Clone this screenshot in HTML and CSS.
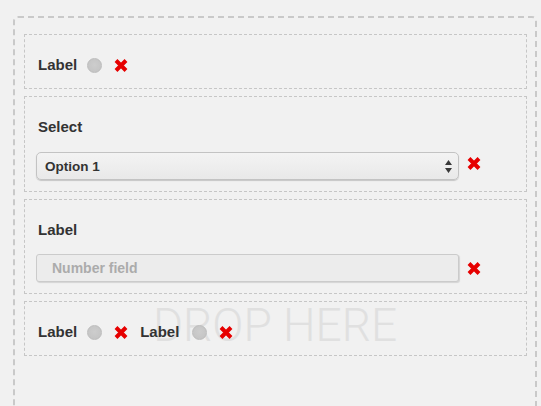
FILE: index.html
```html
<!DOCTYPE html>
<html>
<head>
<meta charset="utf-8">
<link rel="stylesheet" href="styles.css">
</head>
<body>
<div class="canvas">
  <div class="drop-hint">DROP HERE</div>

  <div class="field-box">
    <div class="row">
      <span class="label">Label</span>
      <span class="radio"></span>
      <span class="remove"><svg viewBox="0 0 14 13" width="14" height="13"><path d="M2 1.5 L12 11.5 M12 1.5 L2 11.5" /></svg></span>
    </div>
  </div>

  <div class="field-box">
    <div class="row"><span class="label">Select</span></div>
    <div class="control-row select-row">
      <div class="select">
        <span class="select-value">Option 1</span>
        <svg class="select-arrows" viewBox="0 0 7 13" width="7" height="13"><path d="M0 5 L3.5 0 L7 5 Z M0 8 L3.5 13 L7 8 Z" /></svg>
      </div>
      <span class="remove"><svg viewBox="0 0 14 13" width="14" height="13"><path d="M2 1.5 L12 11.5 M12 1.5 L2 11.5" /></svg></span>
    </div>
  </div>

  <div class="field-box">
    <div class="row"><span class="label">Label</span></div>
    <div class="control-row input-row">
      <input class="number-input" type="text" placeholder="Number field">
      <span class="remove"><svg viewBox="0 0 14 13" width="14" height="13"><path d="M2 1.5 L12 11.5 M12 1.5 L2 11.5" /></svg></span>
    </div>
  </div>

  <div class="field-box">
    <div class="row">
      <span class="label">Label</span>
      <span class="radio"></span>
      <span class="remove"><svg viewBox="0 0 14 13" width="14" height="13"><path d="M2 1.5 L12 11.5 M12 1.5 L2 11.5" /></svg></span>
      <span class="label next">Label</span>
      <span class="radio radio-wide"></span>
      <span class="remove"><svg viewBox="0 0 14 13" width="14" height="13"><path d="M2 1.5 L12 11.5 M12 1.5 L2 11.5" /></svg></span>
    </div>
  </div>
</div>
</body>
</html>
```
FILE: styles.css
```css
html, body {
  margin: 0;
  padding: 0;
  background: #f1f1f1;
  height: 100%;
  overflow: hidden;
}

body {
  font-family: "Liberation Sans", Arial, sans-serif;
  color: #333;
}

.canvas {
  position: relative;
  margin: 16px 4px 0 13px;
  border: 2px dashed #c9c9c9;
  border-radius: 5px;
  padding: 16px 8px 70px 9px;
}

.drop-hint {
  position: absolute;
  left: 0;
  right: 0;
  top: 285px;
  text-align: center;
  font-family: Roboto, "Liberation Sans", sans-serif;
  font-weight: 300;
  font-size: 46px;
  line-height: 45px;
  color: #e0e0e0;
  pointer-events: none;
}

.field-box {
  position: relative;
  border: 1px dashed #c6c6c6;
  padding: 20px 11px 13px 11px;
  margin-bottom: 7px;
}

.row {
  display: flex;
  align-items: center;
  height: 20px;
}

.label {
  font-weight: bold;
  font-size: 15px;
  line-height: 20px;
  padding-left: 2px;
}

.label.next {
  margin-left: 10px;
}

.radio {
  width: 13px;
  height: 13px;
  border-radius: 50%;
  border: 1px solid #bdbdbd;
  background: radial-gradient(circle at 50% 45%, #cdcdcd, #c2c2c2);
  margin-left: 10px;
}

.radio-wide {
  margin-left: 13px;
}

.remove {
  display: inline-flex;
  margin-left: 12px;
}

.remove svg path {
  stroke: #e60000;
  stroke-width: 4;
  fill: none;
}

.control-row {
  display: flex;
  align-items: center;
}

.select-row {
  margin-top: 15px;
  margin-bottom: -2px;
  align-items: flex-start;
}

.select-row .remove {
  margin-left: 8px;
  margin-top: 5px;
}

.input-row {
  margin-top: 14px;
  margin-bottom: -2px;
}

.input-row .remove {
  margin-left: 8px;
}

.select {
  box-sizing: border-box;
  width: 423px;
  height: 28px;
  border: 1px solid #c3c3c3;
  border-radius: 5px;
  background: linear-gradient(#f3f3f3, #e9e9e9);
  box-shadow: 0 1px 1px rgba(0, 0, 0, 0.18);
  display: flex;
  align-items: center;
  justify-content: space-between;
  padding: 0 6px 0 8px;
}

.select-value {
  font-weight: bold;
  font-size: 13.5px;
  color: #333;
}

.select-arrows path {
  fill: #3a3a3a;
}

.number-input {
  box-sizing: border-box;
  width: 423px;
  height: 28px;
  margin: 0;
  border: 1px solid #cbcbcb;
  border-radius: 3px;
  background: #ececec;
  box-shadow: 1px 1px 1px rgba(0, 0, 0, 0.12);
  padding: 0 15px;
  font-family: "Liberation Sans", Arial, sans-serif;
  font-weight: bold;
  font-size: 14px;
  color: #333;
  outline: none;
  -webkit-appearance: none;
  appearance: none;
}

.number-input::placeholder {
  color: #ababab;
  opacity: 1;
}
```
